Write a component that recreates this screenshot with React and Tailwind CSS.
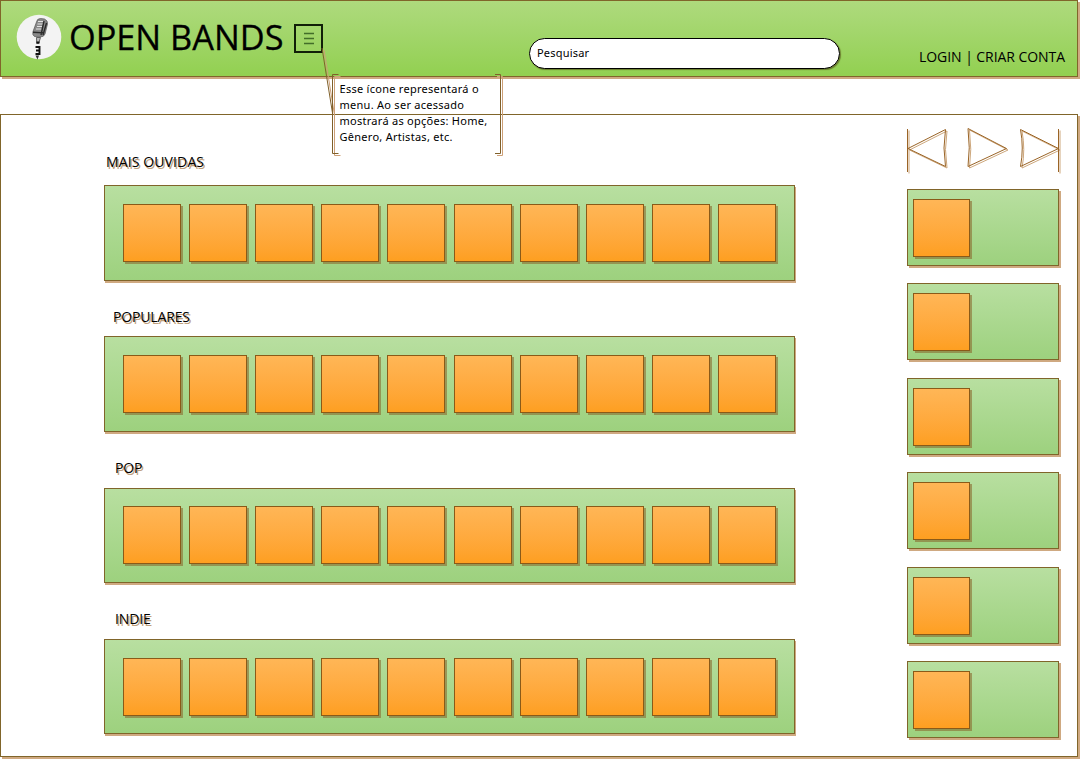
const SECTIONS = [
  { title: "MAIS OUVIDAS", head: "h-[71px] pl-[106px] pb-[13px] tracking-[.12px]", panel: "h-24" },
  { title: "POPULARES", head: "h-[55px] pl-[113px] pb-[9px] tracking-[-.15px]", panel: "h-24" },
  { title: "POP", head: "h-[56px] pl-[115px] pb-[10px] tracking-[-.2px]", panel: "h-[95px] pb-px" },
  { title: "INDIE", head: "h-[56px] pl-[115px] pb-[10px] tracking-[-.15px]", panel: "h-[95px] pt-px" },
];

function Tile({ className }) {
  return (
    <div className={`h-[58px] border border-[#8a5a18] bg-linear-to-b from-[#ffb656] to-[#fe9f20] shadow-[2px_2px_0_#8a6a3099] ${className}`} />
  );
}

const PANEL =
  "border border-[#80652a] bg-linear-to-b from-[#b8dfa0] to-[#9dd17e]";

function Logo() {
  return (
    <svg className="h-[46px] w-[46px] shrink-0" viewBox="0 0 46 46">
      <circle cx="23" cy="23" r="22.3" fill="#f3f3f3" />
      <path d="M20.500 8 Q21 4.500 24.500 4.500 L28.500 5 Q32 6.500 31.500 10 L29 20 Q28 23 24 23 L18.500 22.500 Q16 21 17 17.500 Z" fill="#888" stroke="#555" strokeWidth=".7" />
      <path d="M22 7.500h6M21.500 10h6M21 12.500h5.500M20 15h5.500" stroke="#e2e2e2" strokeWidth="1" />
      <path d="M28 7l-3 14M30.500 9l-3.500 12M17 18.300l11 .6" stroke="#2a2a2a" strokeWidth="1.400" />
      <path d="M20.500 23.500h4l-1.800 6h-2z" fill="#bbb" stroke="#444" strokeWidth=".8" />
      <path d="M20.500 28.500h3M19.500 33h4v7h-4M20 36.500h3.500" fill="none" stroke="#111" strokeWidth="1.900" />
      <path d="M19.500 41.500h3.500l-1.500 4z" fill="#333" />
    </svg>
  );
}

function Controls() {
  const shapes = (
    <>
      <path d="M.5 1v43M1 20.500 38.500 1.500Q35.500 20 38.500 38.500Z" />
      <path d="M61 .5 99.500 20.500 61 38.500Q63.500 20 61 .5Z" />
      <path d="M113.500 1.500 151.500 20.500 113.500 38.500Q117 20 113.500 1.500ZM151.500 1v43" />
    </>
  );
  return (
    <svg className="ml-[907px] mt-[14px] h-[46px] w-[155px]" fill="none" viewBox="0 0 155 46">
      <g stroke="#cda77c" transform="translate(1.5 1.5)">{shapes}</g>
      <g stroke="#9a6426">{shapes}</g>
    </svg>
  );
}

export default function App() {
  return (
    <div className="relative h-[759px] w-[1080px] overflow-hidden bg-white font-['Open_Sans','Noto_Sans',sans-serif] text-black">
      <header className="flex h-[77px] w-[1078px] border border-[#80652a] bg-linear-to-b from-[#aeda7d] to-[#92d050] shadow-[2px_2px_0_#cfa981]">
        <div className="ml-[15px] mt-[13px]"><Logo /></div>
        <h1 className="ml-[7px] mt-[12px] w-[225px] origin-left scale-x-[.98] whitespace-nowrap text-[35px] leading-[48px] [-webkit-text-stroke:0.3px_black]">
          OPEN BANDS
        </h1>
        <svg className="mt-[23px] h-[29px] w-[29px] shrink-0" viewBox="0 0 29 29" fill="none">
          <rect x="1" y="1" width="27" height="27" stroke="#111f08" strokeWidth="2" />
          <path d="M10 9.500h10M10 14.500h10M10 19.500h10" stroke="#426d29" strokeWidth="1.500" />
        </svg>
        <div className="ml-[206px] mt-[37px] flex h-[31px] w-[311px] items-center rounded-full border border-black bg-white pl-[7px] font-['Noto_Sans'] text-[11px] tracking-[.2px] shadow-[1px_1px_1px_#6a7c2e]">
          Pesquisar
        </div>
        <nav className="ml-auto mt-[46px] mr-[12px] whitespace-nowrap text-[14px] leading-5 tracking-[-.06px]">
          LOGIN | CRIAR CONTA
        </nav>
      </header>

      <main className="mt-[37px] grid h-[643px] w-[1078px] border border-[#80652a] bg-white shadow-[2px_2px_0_#cfa981]">
        <div className="col-start-1 row-start-1 -ml-px -mt-px w-[795px]">
          {SECTIONS.map((s) => (
            <section key={s.title}>
              <div className={`flex items-end ${s.head}`}>
                <h2 className="whitespace-nowrap text-[14px] leading-5 text-shadow-[1.5px_1.5px_0_#bfa07c]">
                  {s.title}
                </h2>
              </div>
              <div className={`ml-[104px] flex items-center justify-between pl-[18px] pr-[18px] shadow-[1px_2px_0_#cfa981] ${s.panel} ${PANEL}`}>
                {Array.from({ length: 10 }, (_, i) => (
                  <Tile key={i} className="w-[58px]" />
                ))}
              </div>
            </section>
          ))}
        </div>
        <aside className="col-start-1 row-start-1 -ml-px -mt-px w-[1060px]">
          <Controls />
          <div className="ml-[907px] mt-[15px] flex flex-col gap-[17.400px]">
            {Array.from({ length: 6 }, (_, i) => (
              <div key={i} className={`h-[77px] w-[152px] pl-[5px] pt-[9px] shadow-[2px_2px_0_#cfa981] ${PANEL}`}>
                <Tile className="w-[57px]" />
              </div>
            ))}
          </div>
        </aside>
      </main>

      <svg className="absolute left-[320px] top-[45px] h-[112px] w-[184px]" fill="none">
        <g stroke="#cda077" transform="translate(2 2)">
          <path d="M18.500 29.500h-6v79h6M175 29.500h5.500v79h-5.500M2 3l10.500 65" />
        </g>
        <g stroke="#80602a">
          <path d="M18.500 29.500h-6v79h6M175 29.500h5.500v79h-5.500M2 3l10.500 65" />
        </g>
      </svg>
      <p className="absolute left-[339.500px] top-[81px] whitespace-pre font-['Noto_Sans'] text-[11px] leading-4 tracking-[.27px]">
        {"Esse ícone representará o\nmenu. Ao ser acessado\nmostrará as opções: Home,\nGênero, Artistas, etc."}
      </p>
    </div>
  );
}
